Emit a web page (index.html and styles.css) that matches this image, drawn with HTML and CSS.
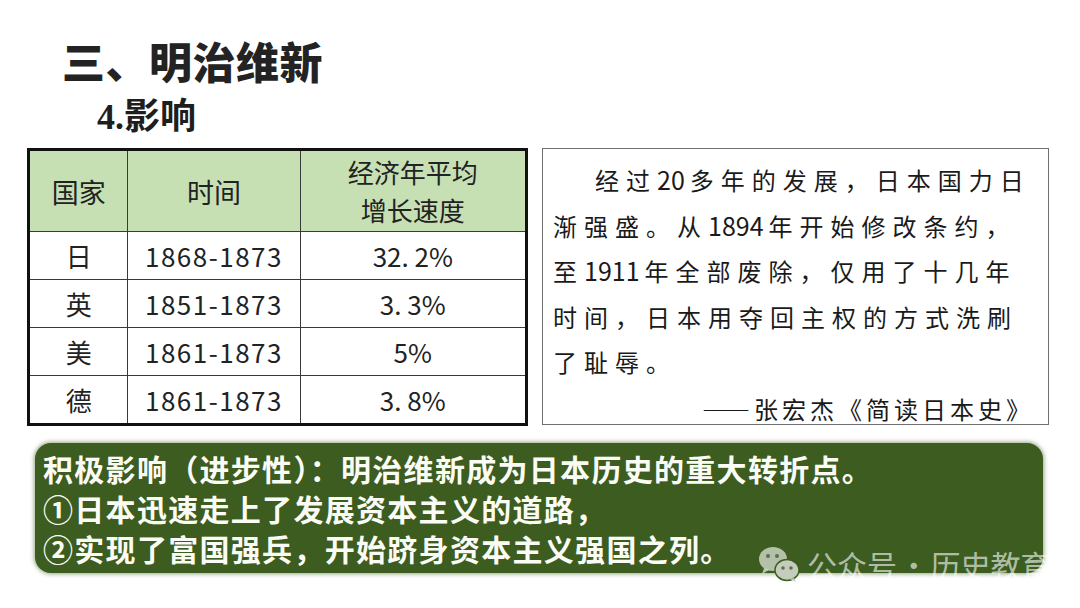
FILE: index.html
```html
<!DOCTYPE html>
<html lang="zh-CN">
<head>
<meta charset="utf-8">
<title>明治维新 影响</title>
<link rel="stylesheet" href="styles.css">
</head>
<body>
<div class="slide">
  <h1 class="title">三、明治维新</h1>
  <h2 class="sub"><span class="num">4.</span>影响</h2>
  <div class="main">
    <table class="data">
      <colgroup><col class="c1"><col class="c2"><col class="c3"></colgroup>
      <thead>
        <tr><th>国家</th><th>时间</th><th><span class="hl">经济年平均</span><span class="hl">增长速度</span></th></tr>
      </thead>
      <tbody>
        <tr><td>日</td><td class="yr">1868-1873</td><td>32. 2%</td></tr>
        <tr><td>英</td><td class="yr">1851-1873</td><td>3. 3%</td></tr>
        <tr><td>美</td><td class="yr">1861-1873</td><td>5%</td></tr>
        <tr><td>德</td><td class="yr">1861-1873</td><td>3. 8%</td></tr>
      </tbody>
    </table>
    <div class="quote">
      <p class="qtext"><span class="first">经过<span class="d">20</span>多年的发展，日本国力日</span><br>渐强盛。从<span class="d">1894</span>年开始修改条约，<br>至<span class="d">1911</span>年全部废除，仅用了十几年<br>时间，日本用夺回主权的方式洗刷<br>了耻辱。</p>
      <p class="src">——张宏杰《简读日本史》</p>
    </div>
  </div>
  <div class="summary">
    <p>积极影响（进步性）：明治维新成为日本历史的重大转折点。</p>
    <p>①日本迅速走上了发展资本主义的道路，</p>
    <p>②实现了富国强兵，开始跻身资本主义强国之列。</p>
  </div>
  <div class="watermark">
    <svg class="wx" width="44" height="38" viewBox="0 0 44 38">
      <ellipse cx="16" cy="14" rx="14" ry="12" fill="rgba(255,255,255,0.62)"/>
      <path d="M7 23 L5 29 L12 25 Z" fill="rgba(255,255,255,0.62)"/>
      <circle cx="11" cy="11" r="2" fill="#5d6e4f"/>
      <circle cx="20" cy="11" r="2" fill="#5d6e4f"/>
      <ellipse cx="30" cy="25" rx="12" ry="10.5" fill="#c4ccbc" stroke="#3c5c20" stroke-width="1.5"/>
      <path d="M37 33 L39 37 L33 34 Z" fill="#c4ccbc"/>
      <circle cx="26" cy="23" r="1.8" fill="#5d6e4f"/>
      <circle cx="34" cy="23" r="1.8" fill="#5d6e4f"/>
    </svg>
    <span class="wtext">公众号 · 历史教育</span>
  </div>
</div>
</body>
</html>
```

FILE: styles.css
```css
html, body {
  margin: 0;
  padding: 0;
  background: #ffffff;
}
.slide {
  position: relative;
  width: 1080px;
  height: 608px;
  overflow: hidden;
  font-family: "Noto Sans CJK SC", "Noto Sans", sans-serif;
  color: #222;
}
.title {
  margin: 0;
  padding: 36px 0 0 62px;
  font-size: 43px;
  line-height: 48px;
  font-weight: 900;
  letter-spacing: 0.5px;
  color: #232323;
}
.sub {
  margin: 15px 0 0 0;
  padding-left: 97px;
  font-family: "Liberation Serif", "Noto Sans CJK SC", serif;
  font-size: 36px;
  line-height: 36px;
  font-weight: 700;
  color: #1e1e1e;
}
.sub .num {
  font-family: "Liberation Serif", serif;
}
.main {
  display: flex;
  gap: 14px;
  margin-top: 13px;
  padding-left: 27px;
}
.data {
  border-collapse: collapse;
  width: 501px;
  height: 276px;
  border: 3px solid #111;
  font-size: 26px;
  color: #222;
}
.data .c1 { width: 100px; }
.data .c2 { width: 173px; }
.data .c3 { width: 228px; }
.data th, .data td {
  border: 1px solid #3a3a3a;
  text-align: center;
  padding: 0;
  font-weight: 400;
}
.data th {
  background: #c6e0b4;
  height: 80px;
  font-size: 27px;
  line-height: 39px;
}
.data th .hl {
  display: block;
  font-size: 26px;
  line-height: 38px;
  height: 38px;
}
.data td {
  height: 47px;
  line-height: 38px;
}
.data td.yr {
  letter-spacing: 1.5px;
}
.quote {
  box-sizing: border-box;
  width: 507px;
  height: 277px;
  border: 1.5px solid #6f6f6f;
  padding: 8px 14px 0 10px;
  color: #1a1a1a;
}
.qtext {
  margin: 0;
  font-size: 24px;
  line-height: 45.5px;
  letter-spacing: 7px;
  white-space: nowrap;
}
.qtext .first {
  padding-left: 42px;
}
.qtext .d {
  letter-spacing: 0;
  margin-right: 5px;
  font-size: 25px;
}
.src {
  margin: 0;
  text-align: right;
  font-size: 24px;
  line-height: 48px;
  letter-spacing: 4px;
}
.summary {
  box-sizing: border-box;
  width: 1008px;
  height: 130px;
  margin: 17px 0 0 35px;
  padding: 5px 8px;
  background: #3c5c20;
  border-radius: 16px;
  box-shadow: 0 0 4px 1px rgba(60, 92, 32, 0.55);
  color: #fbfbf6;
  font-size: 30px;
  font-weight: 700;
  line-height: 40px;
  letter-spacing: 1.3px;
}
.summary p {
  margin: 0;
  white-space: nowrap;
}
.watermark {
  position: absolute;
  left: 757px;
  top: 544px;
  display: flex;
  align-items: center;
  gap: 6px;
}
.wtext {
  font-size: 30px;
  line-height: 40px;
  word-spacing: -5px;
  color: rgba(255, 255, 255, 0.62);
  white-space: nowrap;
}
```
